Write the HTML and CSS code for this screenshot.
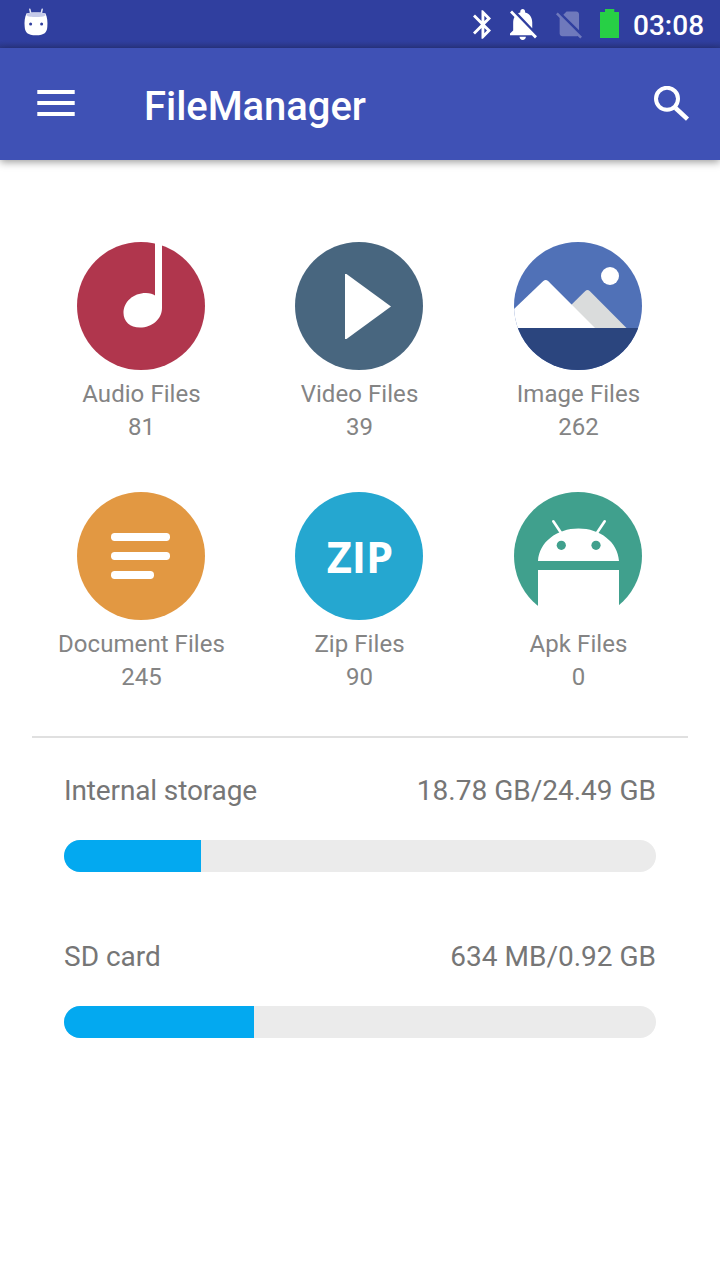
FILE: index.html
```html
<!DOCTYPE html>
<html lang="en">
<head>
<meta charset="utf-8">
<title>FileManager</title>
<link rel="stylesheet" href="styles.css">
</head>
<body>
<div class="status-bar">
  <svg class="icon-robot" width="24" height="28" viewBox="0 0 24 28">
    <path d="M5.8 1.2l1.2 5M18.2 1.2l-1.2 5" stroke="#dfe2f2" stroke-width="1.5" stroke-linecap="round"/>
    <path d="M2.5 5.5C5 4 19 4 21.500 5.500C23.300 9 23.800 14 23.300 19C22.900 24.500 20.500 27.300 12 27.300S1.100 24.500.7 19C.2 14 .7 9 2.500 5.500Z" fill="#fff"/>
    <path d="M2.600 5.500C5 4 19 4 21.400 5.500L21.400 7.500C19 9.600 5 9.600 2.600 7.500Z" fill="#c5cae9"/>
    <circle cx="6.600" cy="16" r="1.500" fill="#303f9f"/><circle cx="17.600" cy="16" r="1.500" fill="#303f9f"/>
  </svg>
  <svg class="icon-bluetooth" width="18" height="29" viewBox="5 2 12.7 20"><path fill="#fff" d="M17.710 7.710L12 2h-1v7.590L6.410 5 5 6.410 10.590 12 5 17.590 6.410 19 11 14.410V22h1l5.710-5.710-4.300-4.290 4.300-4.290zM13 5.830l1.880 1.880L13 9.590V5.830zm1.880 10.460L13 18.170v-3.760l1.880 1.880z"/></svg>
  <svg class="icon-bell" width="27" height="31" viewBox="4 2.500 17 19.500"><path fill="#fff" d="M20 18.690L7.840 6.140 5.270 3.490 4 4.760l2.800 2.800v.01c-.52.99-.8 2.160-.8 3.420v5l-2 2v1h13.730l2 2L21 19.720l-1-1.030zM12 22c1.110 0 2-.89 2-2h-4c0 1.110.89 2 2 2zm6-7.320V11c0-3.080-1.640-5.640-4.500-6.320V4c0-.83-.67-1.500-1.500-1.500s-1.500.67-1.500 1.500v.68c-.15.03-.29.08-.42.12-.1.03-.2.07-.3.11h-.01c-.01 0-.01 0-.02.01-.23.09-.46.2-.68.31 0 0-.01 0-.01.01L18 14.680z"/></svg>
  <svg class="icon-sim" width="26" height="28" viewBox="2.380 3 18.740 19.620"><path fill="#6f79bc" d="M18.990 5c0-1.100-.89-2-1.990-2h-7L7.660 5.340 19 16.680 18.990 5zM3.650 3.880L2.380 5.150 5 7.770V19c0 1.100.9 2 2 2h10.010c.35 0 .67-.1.96-.26l1.880 1.880 1.270-1.270L3.650 3.880z"/></svg>
  <svg class="icon-battery" width="19" height="29" viewBox="0 0 19 29"><path fill="#27d045" d="M5 0h9.300v3H19v26H0V3h5z"/></svg>
  <span class="clock">03:08</span>
</div>
<header class="app-bar">
  <svg class="icon-menu" width="38" height="26" viewBox="0 0 38 26"><path fill="#fff" d="M.3 0h37.400v4H.3zM.3 11h37.400v4H.3zM.3 22h37.400v4H.3z"/></svg>
  <h1 class="title">FileManager</h1>
  <svg class="icon-search" width="36" height="36" viewBox="0 0 36 36"><circle cx="13" cy="12.800" r="11" fill="none" stroke="#fff" stroke-width="4"/><path d="M21.500 22l12 11.200" stroke="#fff" stroke-width="4.500"/></svg>
</header>
<main>
  <section class="categories">
    <div class="category">
      <svg width="128" height="128" viewBox="0 0 128 128"><circle cx="64" cy="64" r="64" fill="#b0364d"/><path fill="#fff" d="M78 0H85V66C85 77 75 85.600 63 85.600C53 85.600 46.500 79.500 46.500 71C46.500 60 56 51 69 51C73 51 76 52 78 53.500Z"/></svg>
      <span class="name">Audio Files</span><span class="count">81</span>
    </div>
    <div class="category">
      <svg width="128" height="128" viewBox="0 0 128 128"><circle cx="64" cy="64" r="64" fill="#48667f"/><path fill="#fff" d="M50 32h1.500L96 64.500 51.500 97H50z"/></svg>
      <span class="name">Video Files</span><span class="count">39</span>
    </div>
    <div class="category">
      <svg width="128" height="128" viewBox="0 0 128 128">
        <defs><clipPath id="disc"><circle cx="64" cy="64" r="64"/></clipPath></defs>
        <g clip-path="url(#disc)"><path fill="#5071b7" d="M0 0h128v128H0z"/><path fill="#dadcdc" d="M50 70L71.300 49Q73.500 47 75.700 49L112.500 86H60z"/><path fill="#fff" d="M-1 68L29.300 39Q31.700 37 34.100 39L81 86H-1z"/><circle cx="96" cy="34" r="9" fill="#fff"/><path fill="#2b457e" d="M0 86h128v42H0z"/></g>
      </svg>
      <span class="name">Image Files</span><span class="count">262</span>
    </div>
    <div class="category">
      <svg width="128" height="128" viewBox="0 0 128 128"><circle cx="64" cy="64" r="64" fill="#e29842"/><g fill="#fff"><rect x="34" y="41" width="59" height="8" rx="3.700"/><rect x="34" y="60" width="59" height="8" rx="3.700"/><rect x="34" y="79" width="43" height="8" rx="3.700"/></g></svg>
      <span class="name">Document Files</span><span class="count">245</span>
    </div>
    <div class="category">
      <svg width="128" height="128" viewBox="0 0 128 128"><circle cx="64" cy="64" r="64" fill="#25a7d0"/><text class="zip" x="65" y="81">ZIP</text></svg>
      <span class="name">Zip Files</span><span class="count">90</span>
    </div>
    <div class="category">
      <svg width="128" height="128" viewBox="0 0 128 128"><circle cx="64" cy="64" r="64" fill="#40a08d"/><path fill="#fff" d="M24 69C25 50 43 36.500 64.500 36.500S104 50 105 69zM24 78h81v50H24z"/><path d="M39.300 29.300l8 12M90.700 29.300l-8 12" stroke="#fff" stroke-width="2.600" stroke-linecap="round"/><g fill="#40a08d"><circle cx="47.300" cy="53.300" r="4.600"/><circle cx="82" cy="53.300" r="4.600"/></g></svg>
      <span class="name">Apk Files</span><span class="count">0</span>
    </div>
  </section>
  <section class="storage">
    <div class="volume">
      <div class="volume-info"><span class="volume-name">Internal storage</span><span>18.78 GB/24.49 GB</span></div>
      <div class="bar"><div class="fill" style="width:137px"></div></div>
    </div>
    <div class="volume">
      <div class="volume-info"><span>SD card</span><span>634 MB/0.92 GB</span></div>
      <div class="bar"><div class="fill" style="width:190px"></div></div>
    </div>
  </section>
</main>
</body>
</html>
```
FILE: styles.css
```css
* { box-sizing: border-box; }
body { margin: 0; height: 1280px; background: #fff; font-family: Roboto, sans-serif; overflow: hidden; }
svg { display: block; flex: none; }
.status-bar { display: flex; align-items: flex-start; height: 48px; padding: 0 16px 0 24px; background: linear-gradient(#303f9f 0 41px, #2b388b 48px); }
.icon-robot { margin-top: 8px; }
.icon-bluetooth { margin: 10px 0 0 auto; }
.icon-bell { margin: 8.5px 0 0 19.5px; }
.icon-sim { margin: 11px 0 0 19px; }
.icon-battery { margin: 9px 0 0 18px; }
.clock { width: 71px; margin-left: 14px; color: #fff; font-size: 28px; font-weight: 500; line-height: 52px; white-space: nowrap; }
.app-bar { display: flex; align-items: flex-start; height: 112px; padding: 0 30px 0 37px; background: #3f51b5; box-shadow: 0 2px 8px rgba(0, 0, 0, .4); }
.icon-menu { margin-top: 42px; }
.title { margin: 0 auto 0 69px; color: #fff; font-size: 40px; font-weight: 500; line-height: 118px; letter-spacing: -.05px; }
.icon-search { margin-top: 38px; }
.categories { display: grid; grid-template-columns: 218px 218px 220px; grid-auto-rows: 250px; height: 578px; margin: 0 32px; padding-top: 82px; border-bottom: 2px solid #e0e0e0; }
.category { display: flex; flex-direction: column; align-items: center; color: #848484; font-size: 24px; line-height: 33px; }
.name { margin-top: 8px; padding-left: 1px; letter-spacing: .06px; }
.count { padding-left: 1px; }
.zip { fill: #fff; font: 700 43.400px "Open Sans", sans-serif; text-anchor: middle; }
.storage { display: grid; gap: 68px; padding: 36px 64px 0; }
.volume-info { display: flex; justify-content: space-between; height: 66px; color: #767676; font-size: 28px; line-height: 34px; }
.volume-name { letter-spacing: -.13px; }
.bar { height: 32px; overflow: hidden; border-radius: 16px; background: #ebebeb; }
.fill { height: 100%; background: #03a9f0; }
```
